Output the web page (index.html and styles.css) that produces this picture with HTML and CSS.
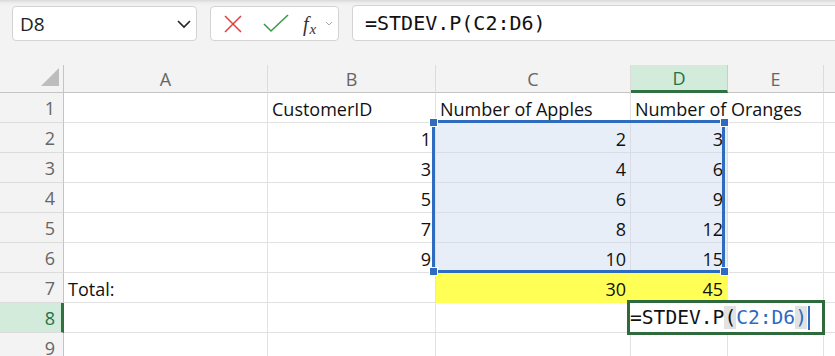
FILE: index.html
```html
<!DOCTYPE html>
<html>
<head>
<meta charset="utf-8">
<link rel="stylesheet" href="styles.css">
</head>
<body>
<div class="app">
  <div class="toolbar">
    <div class="namebox">
      <span class="name">D8</span>
      <svg class="chev" width="16" height="10" viewBox="0 0 16 10"><polyline points="2,2 8,8 14,2" fill="none" stroke="#222" stroke-width="1.6"/></svg>
    </div>
    <div class="fnbox">
      <svg class="ico" width="20" height="20" viewBox="0 0 20 20"><line x1="2" y1="2" x2="18" y2="18" stroke="#e04343" stroke-width="1.6"/><line x1="18" y1="2" x2="2" y2="18" stroke="#e04343" stroke-width="1.6"/></svg>
      <svg class="ico" width="26" height="20" viewBox="0 0 26 20"><polyline points="1,10 8,17 25,1" fill="none" stroke="#3b9a4c" stroke-width="1.6"/></svg>
      <span class="fx"><i>f</i><i class="sub">x</i></span>
      <svg class="smallchev" width="8" height="6" viewBox="0 0 8 6"><polyline points="1,1 4,4 7,1" fill="none" stroke="#aaa" stroke-width="1"/></svg>
    </div>
    <div class="formula">=STDEV.P(C2:D6)</div>
  </div>

  <div class="sheet">
    <div class="grid">
      <div class="ch corner"><span class="tri"></span></div>
      <div class="ch">A</div>
      <div class="ch">B</div>
      <div class="ch">C</div>
      <div class="ch active">D</div>
      <div class="ch">E</div>
      <div class="ch"></div>

      <div class="rh">1</div>
      <div class="c"></div>
      <div class="c">CustomerID</div>
      <div class="c">Number of Apples</div>
      <div class="c over">Number of Oranges</div>
      <div class="c"></div>
      <div class="c"></div>

      <div class="rh">2</div>
      <div class="c"></div>
      <div class="c n">1</div>
      <div class="c n sel">2</div>
      <div class="c n sel">3</div>
      <div class="c"></div>
      <div class="c"></div>

      <div class="rh">3</div>
      <div class="c"></div>
      <div class="c n">3</div>
      <div class="c n sel">4</div>
      <div class="c n sel">6</div>
      <div class="c"></div>
      <div class="c"></div>

      <div class="rh">4</div>
      <div class="c"></div>
      <div class="c n">5</div>
      <div class="c n sel">6</div>
      <div class="c n sel">9</div>
      <div class="c"></div>
      <div class="c"></div>

      <div class="rh">5</div>
      <div class="c"></div>
      <div class="c n">7</div>
      <div class="c n sel">8</div>
      <div class="c n sel">12</div>
      <div class="c"></div>
      <div class="c"></div>

      <div class="rh">6</div>
      <div class="c"></div>
      <div class="c n">9</div>
      <div class="c n sel">10</div>
      <div class="c n sel">15</div>
      <div class="c"></div>
      <div class="c"></div>

      <div class="rh">7</div>
      <div class="c">Total:</div>
      <div class="c"></div>
      <div class="c n yel">30</div>
      <div class="c n yel">45</div>
      <div class="c"></div>
      <div class="c"></div>

      <div class="rh active">8</div>
      <div class="c"></div>
      <div class="c"></div>
      <div class="c"></div>
      <div class="c"></div>
      <div class="c"></div>
      <div class="c"></div>

      <div class="rh">9</div>
      <div class="c"></div>
      <div class="c"></div>
      <div class="c"></div>
      <div class="c"></div>
      <div class="c"></div>
      <div class="c"></div>
    </div>

    <div class="selection"></div>
    <span class="handle h-tl"></span>
    <span class="handle h-tr"></span>
    <span class="handle h-bl"></span>
    <span class="handle h-br"></span>

    <div class="editor"><span>=STDEV.P</span><span class="paren">(</span><span class="ref">C2:D6</span><span class="paren ref">)</span><span class="caret"></span></div>
  </div>
</div>
</body>
</html>
```

FILE: styles.css
```css
html, body {
  margin: 0;
  padding: 0;
  width: 835px;
  height: 356px;
  overflow: hidden;
  background: #f3f3f3;
}

.app {
  width: 835px;
  height: 356px;
  overflow: hidden;
  font-family: "Open Sans", "Liberation Sans", sans-serif;
  color: #111;
  background: linear-gradient(#d9d9d9 0px, #eeeeee 3px, #f3f3f3 6px, #f3f3f3 100%);
}

.toolbar {
  display: flex;
  align-items: flex-end;
  height: 41px;
  padding-left: 12px;
  gap: 13px;
  margin-bottom: 24px;
}

.namebox {
  box-sizing: border-box;
  width: 185px;
  height: 35px;
  background: #fff;
  border: 1px solid #d3d3d3;
  border-radius: 4px;
  display: flex;
  align-items: center;
  justify-content: space-between;
  padding: 0 4px 0 7px;
}

.name {
  font-size: 19px;
  color: #222;
}

.chev {
  display: block;
}

.fnbox {
  box-sizing: border-box;
  width: 129px;
  height: 35px;
  background: #fff;
  border: 1px solid #d3d3d3;
  border-radius: 4px;
  display: flex;
  align-items: center;
  padding-left: 12px;
}

.fnbox .ico {
  display: block;
  margin-right: 20px;
}

.fnbox .ico + .ico {
  margin-right: 14px;
}

.fx {
  font-family: "Liberation Serif", serif;
  font-size: 20px;
  color: #333;
  line-height: 1;
  display: flex;
  align-items: flex-end;
}

.fx .sub {
  font-size: 15px;
  margin-left: 1px;
  position: relative;
  top: 3px;
}

.smallchev {
  display: block;
  margin-left: 9px;
}

.formula {
  box-sizing: border-box;
  flex: 1;
  height: 36px;
  margin-right: -10px;
  background: #fff;
  border: 1px solid #d3d3d3;
  border-radius: 4px 0 0 4px;
  font-family: "DejaVu Sans Mono", "Liberation Mono", monospace;
  font-size: 20px;
  display: flex;
  align-items: center;
  padding-left: 12px;
  color: #111;
}

.sheet {
  position: relative;
}

.grid {
  display: grid;
  grid-template-columns: 64px 204px 168px 195px 97px 96px 20px;
  grid-template-rows: 28px repeat(9, 30px);
  background: #fff;
  font-size: 18px;
}

.ch {
  box-sizing: border-box;
  background: #f3f3f3;
  border-right: 1px solid #dcdcdc;
  border-bottom: 1px solid #c4c4c4;
  color: #666;
  display: flex;
  align-items: center;
  justify-content: center;
  font-size: 18px;
}

.ch.corner {
  border-right: 1px solid #c4c4c4;
  position: relative;
}

.tri {
  position: absolute;
  right: 4px;
  bottom: 6px;
  width: 0;
  height: 0;
  border-left: 18px solid transparent;
  border-bottom: 18px solid #bdbdbd;
}

.ch.active {
  background: #d3ebdb;
  color: #217346;
  border-bottom: 3px solid #2f7141;
  border-right-color: #b6d9c2;
}

.rh {
  box-sizing: border-box;
  background: #f3f3f3;
  border-right: 1px solid #c4c4c4;
  border-bottom: 1px solid #dcdcdc;
  color: #666;
  display: flex;
  align-items: flex-end;
  justify-content: flex-end;
  padding: 0 8px 2px 0;
  font-size: 18px;
  line-height: 24px;
}

.rh.active {
  background: #d3ebdb;
  color: #217346;
  border-right: 3px solid #2f7141;
  padding-right: 6px;
}

.c {
  box-sizing: border-box;
  border-right: 1px solid #e1e1e1;
  border-bottom: 1px solid #e1e1e1;
  display: flex;
  align-items: flex-end;
  padding: 0 4px 1px 4px;
  line-height: 24px;
  white-space: nowrap;
  color: #111;
}

.c.n {
  justify-content: flex-end;
}

.c.over {
  overflow: visible;
  border-right-color: #fff;
  position: relative;
  z-index: 1;
}

.c.sel {
  background: #e8eef8;
  border-right-color: #d9dee6;
  border-bottom-color: #d9dee6;
}

.c.yel {
  background: #ffff55;
  border-right-color: #ffff55;
  border-bottom-color: #ffff55;
}

.selection {
  position: absolute;
  left: 432px;
  top: 55px;
  width: 293px;
  height: 153px;
  box-sizing: border-box;
  border: 3px solid #2f6bbf;
  z-index: 2;
}

.handle {
  position: absolute;
  width: 7px;
  height: 7px;
  background: #2f6bbf;
  border: 1px solid #fff;
  z-index: 3;
}

.h-tl { left: 429px; top: 53px; }
.h-tr { left: 720px; top: 53px; }
.h-bl { left: 429px; top: 202px; }
.h-br { left: 720px; top: 202px; }

.editor {
  position: absolute;
  left: 627px;
  top: 235px;
  width: 198px;
  height: 35px;
  box-sizing: border-box;
  border: 3px solid #2e6a3b;
  background: #fff;
  z-index: 4;
  display: flex;
  align-items: center;
  padding-left: 0;
  font-family: "DejaVu Sans Mono", "Liberation Mono", monospace;
  font-size: 19.6px;
  color: #111;
  white-space: nowrap;
}

.editor .paren {
  background: #e2e2e2;
}

.editor .ref {
  color: #2f6bbf;
}

.caret {
  display: inline-block;
  width: 2px;
  height: 24px;
  background: #2f6bbf;
  margin-left: 1px;
}
```
